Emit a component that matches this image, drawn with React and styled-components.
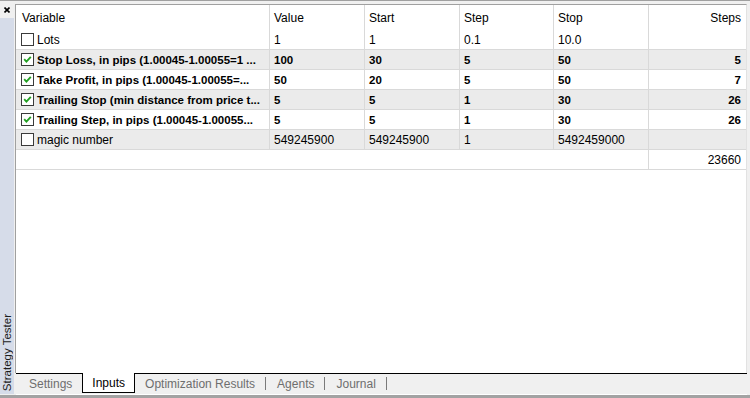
import React from "react";
import styled, { createGlobalStyle } from "styled-components";

const COLS = "254px 95px 95px 94px 95px 1fr";

const rows = [
  { name: "Lots", checked: false, value: "1", start: "1", step: "0.1", stop: "10.0", steps: "" },
  { name: "Stop Loss, in pips (1.00045-1.00055=1 ...", checked: true, value: "100", start: "30", step: "5", stop: "50", steps: "5" },
  { name: "Take Profit, in pips (1.00045-1.00055=...", checked: true, value: "50", start: "20", step: "5", stop: "50", steps: "7" },
  { name: "Trailing Stop (min distance from price t...", checked: true, value: "5", start: "5", step: "1", stop: "30", steps: "26" },
  { name: "Trailing Step, in pips (1.00045-1.00055...", checked: true, value: "5", start: "5", step: "1", stop: "30", steps: "26" },
  { name: "magic number", checked: false, value: "549245900", start: "549245900", step: "1", stop: "5492459000", steps: "" },
];

const tabs = [
  { label: "Settings" },
  { label: "Inputs", active: true },
  { label: "Optimization Results", divider: true },
  { label: "Agents", divider: true },
  { label: "Journal", divider: true },
];

const App = () => {
  return (
    <>
      <GlobalStyle />
      <Window>
        <Strip>
          <CloseBox>
            <svg width="6" height="6" viewBox="0 0 6 6">
              <path d="M0.5 0.5 L5.5 5.5 M5.5 0.5 L0.5 5.5" stroke="#000" strokeWidth="1.6" />
            </svg>
          </CloseBox>
          <Caption>
            <CaptionText>Strategy Tester</CaptionText>
          </Caption>
        </Strip>

        <Main>
          <Panel>
            <HeaderRow>
              <HeadCell $first>Variable</HeadCell>
              <HeadCell>Value</HeadCell>
              <HeadCell>Start</HeadCell>
              <HeadCell>Step</HeadCell>
              <HeadCell>Stop</HeadCell>
              <HeadCell $right>Steps</HeadCell>
            </HeaderRow>

            {rows.map((r, i) => (
              <Row key={i} $shaded={i % 2 === 1} $bold={r.checked}>
                <NameCell>
                  <Check>
                    {r.checked && (
                      <svg width="9" height="9" viewBox="0 0 9 9">
                        <path d="M1.2 4.2 L3.4 6.6 L7.8 1.8" stroke="#22a022" strokeWidth="1.8" fill="none" />
                      </svg>
                    )}
                  </Check>
                  <Name>{r.name}</Name>
                </NameCell>
                <Cell>{r.value}</Cell>
                <Cell>{r.start}</Cell>
                <Cell>{r.step}</Cell>
                <Cell>{r.stop}</Cell>
                <Cell $right>{r.steps}</Cell>
              </Row>
            ))}

            <Row>
              <Cell $span />
              <Cell $right>23660</Cell>
            </Row>
          </Panel>

          <TabBar>
            {tabs.map((t) => (
              <Tab key={t.label} $active={t.active} $divider={t.divider}>
                {t.label}
              </Tab>
            ))}
          </TabBar>
        </Main>
      </Window>
    </>
  );
};

export default App;

const GlobalStyle = createGlobalStyle`
  html, body {
    margin: 0;
    padding: 0;
    background: #f0f0f0;
  }
  body {
    font-family: "Liberation Sans", Arial, sans-serif;
    font-size: 12px;
    color: #000;
  }
`;

const Window = styled.div`
  width: 750px;
  height: 398px;
  box-sizing: border-box;
  display: flex;
  background: #f0f0f0;
  border-top: 1px solid #a0a0a0;
  border-bottom: 3px solid #a3a3a3;
`;

const Strip = styled.div`
  width: 14px;
  display: flex;
  flex-direction: column;
  padding-bottom: 1px;
`;

const CloseBox = styled.div`
  height: 17px;
  display: flex;
  justify-content: center;
  padding-top: 6px;
  box-sizing: border-box;
`;

const Caption = styled.div`
  flex: 1;
  background: #d6dce9;
  display: flex;
  flex-direction: column;
  justify-content: flex-end;
  align-items: center;
  padding-bottom: 3px;
`;

const CaptionText = styled.span`
  writing-mode: vertical-rl;
  transform: rotate(180deg);
  font-size: 11.5px;
  color: #1c1c1c;
  white-space: nowrap;
`;

const Main = styled.div`
  flex: 1;
  margin-left: 1px;
  padding: 3px 3px 0 0;
  display: flex;
  flex-direction: column;
`;

const Panel = styled.div`
  flex: 1;
  background: #fff;
  border-top: 1px solid #a0a0a0;
  border-left: 1px solid #a0a0a0;
  border-right: 1px solid #e2e2e2;
`;

const HeaderRow = styled.div`
  display: grid;
  grid-template-columns: ${COLS};
  height: 25px;
`;

const Row = styled.div`
  display: grid;
  grid-template-columns: ${COLS};
  height: 20px;
  box-sizing: border-box;
  border-bottom: 1px solid #d9d9d9;
  background: ${(p) => (p.$shaded ? "#ebebeb" : "#fff")};
  font-weight: ${(p) => (p.$bold ? "bold" : "normal")};
  font-size: ${(p) => (p.$bold ? "11.5px" : "12px")};
`;

const Cell = styled.div`
  display: flex;
  align-items: center;
  justify-content: ${(p) => (p.$right ? "flex-end" : "flex-start")};
  padding: ${(p) => (p.$right ? "0 5px 0 4px" : "0 4px")};
  border-right: ${(p) => (p.$right ? "none" : "1px solid #d9d9d9")};
  grid-column: ${(p) => (p.$span ? "1 / 6" : "auto")};
  white-space: nowrap;
  overflow: hidden;
`;

const HeadCell = styled(Cell)`
  padding-left: ${(p) => (p.$first ? "6px" : "4px")};
  padding-top: 1px;
`;

const NameCell = styled(Cell)`
  padding-left: 5px;
`;

const Check = styled.span`
  width: 13px;
  height: 13px;
  box-sizing: border-box;
  border: 1px solid #3a3a3a;
  background: #fff;
  display: flex;
  align-items: center;
  justify-content: center;
  flex-shrink: 0;
  margin-right: 3px;
`;

const Name = styled.span`
  white-space: nowrap;
`;

const TabBar = styled.div`
  height: 22px;
  box-sizing: border-box;
  border-top: 1px solid #000;
  border-bottom: 1px solid #fff;
  display: flex;
  align-items: flex-start;
  padding-left: 3px;
  margin-left: 1px;
`;

const Tab = styled.div`
  height: 20px;
  box-sizing: border-box;
  display: flex;
  align-items: center;
  padding: 0 9px;
  color: ${(p) => (p.$active ? "#000" : "#6e6e6e")};
  background: ${(p) => (p.$active ? "#fff" : "transparent")};
  border: ${(p) => (p.$active ? "1px solid #000" : "1px solid transparent")};
  border-top: none;
  margin-top: ${(p) => (p.$active ? "-1px" : "0")};

  &::after {
    content: "";
    display: ${(p) => (p.$divider ? "block" : "none")};
    width: 1px;
    height: 13px;
    background: #7a7a7a;
    margin-left: 10px;
    margin-right: -9px;
  }
`;
